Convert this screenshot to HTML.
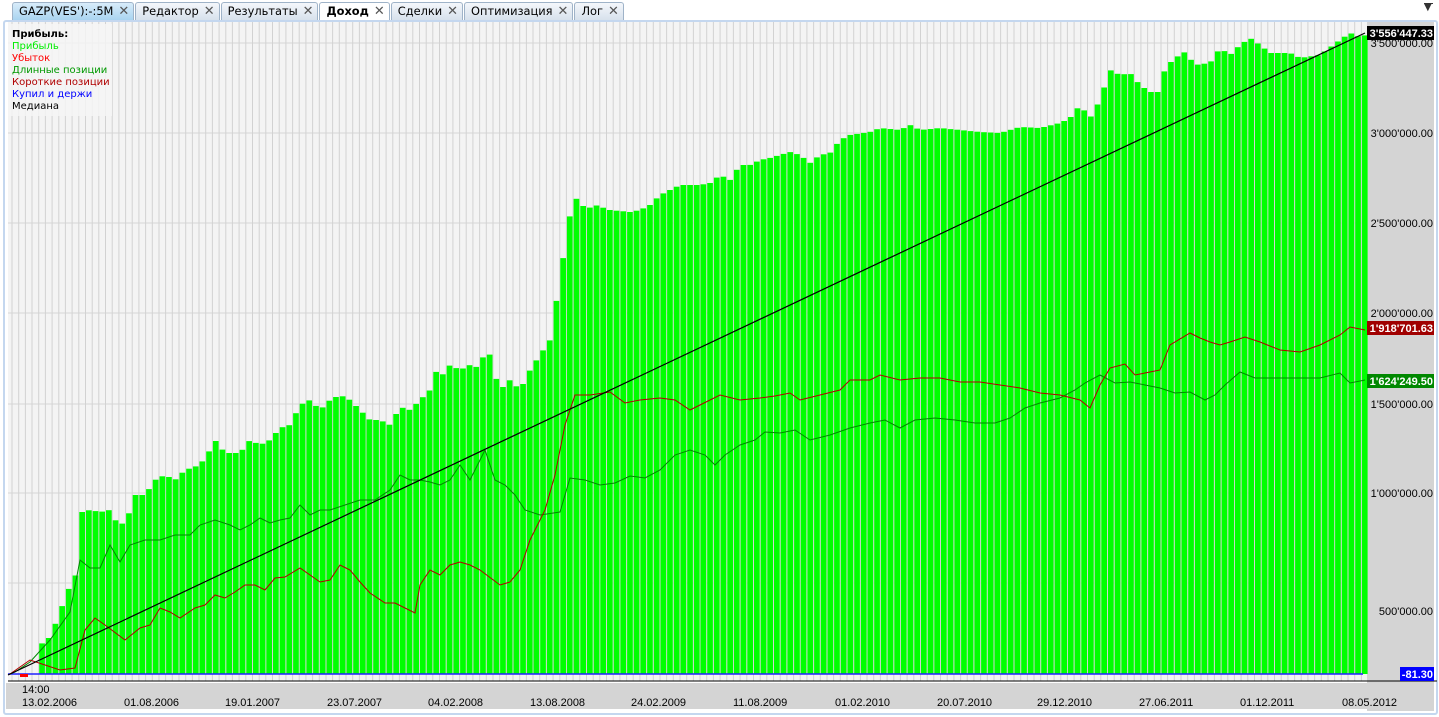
<!DOCTYPE html>
<html><head><meta charset="utf-8"><style>
body{margin:0;width:1439px;height:717px;background:#fff;overflow:hidden;font-family:"DejaVu Sans","Liberation Sans",sans-serif;position:relative}
.tabs{position:absolute;left:12px;top:2px;height:19px;display:flex}
.tab{height:17px;border:1px solid #9fb3c8;border-bottom:none;border-radius:3px 3px 0 0;background:linear-gradient(#f4f7fb,#d7e1ec);font-size:11.4px;line-height:17px;padding:0 4px 0 6px;margin-right:1px;color:#000;white-space:nowrap}
.tab.first{background:linear-gradient(#d8ecfa,#a9d4f0)}
.tab.act{background:#fff;font-weight:bold;height:19px}
.tab .x{display:inline-block;margin-left:5px;color:#555;font-size:13px;font-weight:bold}
.frame{position:absolute;left:3px;top:20px;width:1431px;height:691px;border:2px solid #c4d7ef;border-radius:3px}
svg{position:absolute;left:0;top:0}
</style></head><body>
<div class="tabs">
<div class="tab first">GAZP(VES'):-:5M<span class="x">✕</span></div>
<div class="tab">Редактор<span class="x">✕</span></div>
<div class="tab">Результаты<span class="x">✕</span></div>
<div class="tab act">Доход<span class="x">✕</span></div>
<div class="tab">Сделки<span class="x">✕</span></div>
<div class="tab">Оптимизация<span class="x">✕</span></div>
<div class="tab">Лог<span class="x">✕</span></div>
</div>
<div style="position:absolute;left:1424px;top:4px;font-size:10px;color:#333;line-height:8px">▼</div>
<div style="position:absolute;left:1424px;top:3px;width:9px;height:1px;background:#333"></div>
<div class="frame"></div>
<svg id="s" width="1439" height="717" xmlns="http://www.w3.org/2000/svg"></svg>
<script>
const S=document.getElementById('s');let h='';
const X0=8,X1=1367,Y0=22,YB=681;
h+=`<rect x="${X0}" y="${Y0}" width="${X1-X0}" height="${YB-Y0}" fill="#f4f4f4"/>`;
h+=`<rect x="${X1}" y="${Y0}" width="${1434-X1}" height="${YB-Y0+30}" fill="#d4d4d4"/>`;
h+=`<rect x="${X0-2}" y="${YB+2}" width="${X1-X0+2}" height="26" fill="#d4d4d4"/>`;
[43,133,223,313,404,493,583].forEach(y=>h+=`<line x1="${X0}" x2="${X1}" y1="${y}" y2="${y}" stroke="#d6d6d6"/>`);
const step=6.68;
for(let x=X0+4;x<X1;x+=step)h+=`<line x1="${x.toFixed(1)}" x2="${x.toFixed(1)}" y1="${Y0}" y2="${YB}" stroke="#d2d2d2"/>`;
const P=[[35,672],[40,645],[50,637],[57,620],[68,590],[75,580],[82,512],[90,510],[100,512],[110,510],[115,520],[125,525],[135,495],[145,495],[155,480],[165,475],[175,480],[185,470],[200,465],[210,450],[215,440],[225,453],[240,453],[250,440],[260,445],[270,440],[280,428],[290,425],[300,405],[310,400],[320,410],[330,400],[340,395],[350,400],[360,410],[370,420],[380,420],[390,425],[400,407],[410,410],[420,400],[430,390],[435,370],[440,378],[450,365],[460,370],[470,365],[480,368],[485,350],[490,355],[495,375],[500,390],[510,380],[520,390],[530,370],[540,355],[550,340],[555,310],[562,265],[570,215],[578,195],[585,210],[595,205],[610,210],[630,212],[640,210],[650,205],[660,195],[670,190],[680,185],[690,185],[700,185],[710,183],[720,175],[730,180],[740,165],[750,165],[760,160],[770,158],[780,155],[790,152],[800,155],[810,163],[820,155],[830,153],[840,140],[850,135],[870,132],[880,128],[900,130],[910,125],[920,130],[940,128],[960,130],[980,132],[1000,133],[1020,127],[1040,128],[1060,123],[1070,118],[1080,105],[1090,118],[1100,100],[1110,70],[1120,75],[1130,73],[1140,85],[1150,92],[1160,92],[1165,68],[1175,58],[1185,52],[1195,65],[1210,63],[1220,48],[1230,55],[1240,45],[1250,38],[1260,45],[1270,53],[1290,53],[1300,58],[1320,55],[1340,40],[1350,33],[1360,37],[1366,35]];
function interp(x){for(let i=1;i<P.length;i++)if(x<=P[i][0]){const a=P[i-1],b=P[i];return a[1]+(b[1]-a[1])*(x-a[0])/(b[0]-a[0]);}return P[P.length-1][1];}
for(let x=X0+4+step*4;x<X1-2;x+=step){const c=x+step/2;const y=interp(c);h+=`<rect x="${(x+0.5).toFixed(1)}" y="${y.toFixed(1)}" width="${(step-1).toFixed(1)}" height="${(674-y).toFixed(1)}" fill="#00ff00"/>`;}
h+=`<line x1="${X0}" x2="1363" y1="674" y2="674" stroke="#2020ff" stroke-width="1.5"/>`;
h+=`<rect x="20" y="674" width="8" height="3" fill="#f00"/>`;
h+=`<line x1="${X0}" x2="${X1+70}" y1="${YB}" y2="${YB}" stroke="#000"/>`;
const R=[[10,674],[30,660],[45,665],[60,670],[75,668],[85,630],[95,618],[105,625],[125,640],[140,628],[150,625],[160,608],[170,612],[180,618],[195,608],[205,605],[215,595],[225,598],[235,592],[245,585],[255,585],[265,590],[275,578],[285,577],[300,568],[310,575],[320,582],[330,580],[340,565],[350,570],[360,582],[370,593],[385,603],[395,603],[415,613],[420,585],[430,570],[440,575],[450,565],[460,562],[470,565],[480,570],[500,585],[510,582],[520,570],[530,540],[545,510],[555,475],[565,425],[575,395],[590,395],[610,392],[625,403],[640,400],[660,398],[675,400],[690,410],[700,405],[720,395],[740,400],[760,398],[775,396],[790,393],[800,400],[820,395],[840,390],[850,380],[870,380],[880,375],[900,380],[920,378],[940,378],[960,382],[980,382],[1000,385],[1020,388],[1040,393],[1060,395],[1080,400],[1090,408],[1100,385],[1110,368],[1125,364],[1135,375],[1150,372],[1160,370],[1170,345],[1190,333],[1200,338],[1210,342],[1220,345],[1230,342],[1245,337],[1260,342],[1280,350],[1300,352],[1320,345],[1340,335],[1350,327],[1365,330]];
const G=[[10,674],[15,672],[30,662],[50,640],[70,612],[80,560],[90,568],[100,568],[110,545],[120,562],[130,545],[145,540],[160,540],[175,535],[190,535],[200,525],[215,520],[230,525],[240,530],[250,525],[260,518],[270,523],[280,520],[290,518],[300,505],[310,515],[320,510],[330,510],[345,505],[360,500],[375,500],[390,490],[400,475],[410,480],[420,480],[430,482],[440,485],[450,480],[460,465],[470,480],[485,450],[495,480],[505,485],[515,495],[525,510],[540,515],[560,512],[570,478],[585,480],[600,485],[615,483],[630,476],[645,478],[660,470],[675,455],[690,450],[705,455],[715,465],[725,455],[740,445],[755,440],[765,432],[780,433],[795,430],[810,440],[830,435],[850,428],[870,423],[885,420],[900,428],[915,420],[935,418],[955,420],[975,423],[995,423],[1010,418],[1025,408],[1040,403],[1060,398],[1075,390],[1085,383],[1100,375],[1115,383],[1130,382],[1145,385],[1160,388],[1175,393],[1190,392],[1205,400],[1215,395],[1225,385],[1240,372],[1255,378],[1275,378],[1300,378],[1320,378],[1340,373],[1350,383],[1365,380]];
const pl=(a,c)=>`<polyline fill="none" stroke="${c}" stroke-width="1" points="${a.map(p=>p.join(',')).join(' ')}"/>`;
h+=pl(G,'#008800');h+=pl(R,'#b00000');
h+=`<line x1="8" y1="675" x2="1365" y2="33" stroke="#000" stroke-width="1.2"/>`;
const f='font-family="Liberation Sans,sans-serif" font-size="11"';
[[43,"3'500'000.00"],[133,"3'000'000.00"],[223,"2'500'000.00"],[313,"2'000'000.00"],[404,"1'500'000.00"],[493,"1'000'000.00"],[611,"500'000.00"]].forEach(([y,t])=>h+=`<text x="1433" y="${y+4}" text-anchor="end" ${f} fill="#000">${t}</text>`);
[[33,'#000',"3'556'447.33"],[328,'#a00000',"1'918'701.63"],[381,'#008800',"1'624'249.50"]].forEach(([y,c,t])=>h+=`<rect x="1367" y="${y-7}" width="67" height="14" fill="${c}"/><text x="1433" y="${y+4}" text-anchor="end" ${f} font-weight="bold" fill="#fff">${t}</text>`);
h+=`<rect x="1400" y="667" width="34" height="14" fill="#0000ff"/><text x="1433" y="678" text-anchor="end" ${f} font-weight="bold" fill="#fff">-81.30</text>`;
h+=`<text x="22" y="693" ${f}>14:00</text>`;
[[22,'13.02.2006'],[124,'01.08.2006'],[225,'19.01.2007'],[327,'23.07.2007'],[428,'04.02.2008'],[530,'13.08.2008'],[631,'24.02.2009'],[733,'11.08.2009'],[835,'01.02.2010'],[937,'20.07.2010'],[1037,'29.12.2010'],[1139,'27.06.2011'],[1240,'01.12.2011'],[1342,'08.05.2012']].forEach(([x,t])=>h+=`<text x="${x}" y="706" ${f}>${t}</text>`);
h+=`<rect x="8" y="24" width="104" height="92" fill="#f4f4f4" opacity="0.85"/>`;
const L=[['Прибыль:','#000',1],['Прибыль','#00ee00'],['Убыток','#ff0000'],['Длинные позиции','#009900'],['Короткие позиции','#b00000'],['Купил и держи','#0000ff'],['Медиана','#000']];
L.forEach(([t,c,b],i)=>h+=`<text x="12" y="${37+i*12}" font-family="DejaVu Sans,sans-serif" font-size="10" ${b?'font-weight="bold"':''} fill="${c}">${t}</text>`);
S.innerHTML=h;
</script>
</body></html>
